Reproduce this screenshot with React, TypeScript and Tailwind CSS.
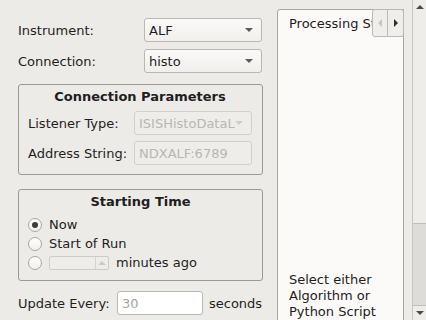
import React from 'react';

function Arrow({ dir, color }: { dir: 'down' | 'up' | 'left' | 'right'; color: string }) {
  const pts = {
    down: '0,0 8,0 4,4',
    up: '0,4 8,4 4,0',
    left: '4,0 4,8 0,4',
    right: '0,0 0,8 4,4',
  }[dir];
  const w = dir === 'left' || dir === 'right' ? 4 : 8;
  const h = dir === 'left' || dir === 'right' ? 8 : 4;
  return (
    <svg width={w} height={h} viewBox={`0 0 ${w} ${h}`}>
      <polygon points={pts} fill={color} />
    </svg>
  );
}

function Combo({ value, disabled }: { value: string; disabled?: boolean }) {
  return (
    <div
      className={
        'w-[118px] h-[24px] rounded-[3px] border flex items-center pl-[4px] pr-[8px] overflow-hidden ' +
        (disabled
          ? 'border-[#d3d0cb] bg-[#efedea] text-[#b9b6b1]'
          : 'border-[#bab6b0] bg-gradient-to-b from-[#fbfaf9] to-[#f1efed] text-[#1c1c1c]')
      }
    >
      <span className="flex-1 whitespace-nowrap overflow-hidden">{value}</span>
      <Arrow dir="down" color={disabled ? '#d0cdc8' : '#5a5a58'} />
    </div>
  );
}

function Radio({ checked }: { checked?: boolean }) {
  return (
    <div className="w-[14px] h-[14px] rounded-full border border-[#a9a59f] bg-gradient-to-b from-[#ffffff] to-[#f1efed] flex items-center justify-center">
      {checked && <div className="w-[6px] h-[6px] rounded-full bg-[#3c3c3c]" />}
    </div>
  );
}

export default function App() {
  return (
    <div className="w-[426px] h-[320px] flex bg-[#edebe8] overflow-hidden font-['DejaVu_Sans',sans-serif] text-[13px] leading-[17px] text-[#1e1e1e]">
      <div className="w-[277px] shrink-0 pl-[18px] pr-[14px] pt-[18px]">
        <div className="flex flex-col gap-[7px]">
          <div className="flex items-center">
            <span className="w-[126px]">Instrument:</span>
            <Combo value="ALF" />
          </div>
          <div className="flex items-center">
            <span className="w-[126px]">Connection:</span>
            <Combo value="histo" />
          </div>
        </div>

        <div className="mt-[11px] h-[91px] rounded-[3px] border border-[#9d9992] pt-[3px] pl-[9px] pr-[10px]">
          <div className="text-center font-bold">Connection Parameters</div>
          <div className="mt-[6px] flex items-center">
            <span className="w-[106px]">Listener Type:</span>
            <Combo value="ISISHistoDataListener" disabled />
          </div>
          <div className="mt-[6px] flex items-center">
            <span className="w-[106px]">Address String:</span>
            <div className="w-[118px] h-[24px] rounded-[3px] border border-[#d3d0cb] bg-[#efedea] text-[#b9b6b1] flex items-center pl-[4px]">
              NDXALF:6789
            </div>
          </div>
        </div>

        <div className="mt-[14px] h-[92px] rounded-[3px] border border-[#9d9992] pt-[3px] pl-[9px]">
          <div className="text-center font-bold pr-[9px]">Starting Time</div>
          <div className="mt-[5px] flex flex-col">
            <div className="h-[19px] flex items-center gap-[7px]">
              <Radio checked />
              <span>Now</span>
            </div>
            <div className="h-[19px] flex items-center gap-[7px]">
              <Radio />
              <span>Start of Run</span>
            </div>
            <div className="h-[19px] flex items-center gap-[7px]">
              <Radio />
              <div className="w-[60px] h-[14px] rounded-[2px] border border-[#cfccc7] bg-[#efedea] flex justify-end">
                <div className="w-[13px] border-l border-[#d6d3ce] flex items-center justify-center">
                  <Arrow dir="up" color="#cdcac5" />
                </div>
              </div>
              <span>minutes ago</span>
            </div>
          </div>
        </div>

        <div className="mt-[10px] flex items-center">
          <span className="w-[99px]">Update Every:</span>
          <div className="w-[86px] h-[24px] rounded-[3px] border border-[#bab6b0] bg-white text-[#a8a5a0] flex items-center pl-[4px]">
            30
          </div>
          <span className="ml-[6px]">seconds</span>
        </div>
      </div>

      <div className="mt-[9px] w-[127px] shrink-0 h-[340px] relative rounded-tl-[3px] border border-[#a9a59f] bg-[#fcfaf8]">
        <div className="pl-[11px] pt-[5px] whitespace-nowrap overflow-hidden">Processing Streams</div>
        <div className="absolute top-[-1px] right-[-1px] flex">
          <div className="w-[16px] h-[28px] rounded-l-[3px] border border-[#bcb8b2] bg-[#f0eeeb] flex items-center justify-center">
            <Arrow dir="left" color="#c9c6c1" />
          </div>
          <div className="w-[16px] h-[28px] rounded-r-[3px] border border-l-0 border-[#bcb8b2] bg-[#f0eeeb] flex items-center justify-center">
            <Arrow dir="right" color="#2e2e2e" />
          </div>
        </div>
        <div className="pl-[11px] mt-[240px] leading-[16px]">
          <div>Select either</div>
          <div>Algorithm or</div>
          <div>Python Script</div>
        </div>
      </div>

      <div className="w-[8px] shrink-0" />

      <div className="w-[14px] shrink-0 h-[320px] flex flex-col border-l border-[#c9c6c1] bg-[#dedcd8]">
        <div className="h-[14px] flex items-center justify-center bg-[#efedea]">
          <Arrow dir="up" color="#4a4a4a" />
        </div>
        <div className="h-[210px] bg-[#efedea] border-b border-[#c2beb8]" />
        <div className="flex-1" />
        <div className="h-[15px] flex items-center justify-center bg-[#efedea] border-t border-[#c2beb8]">
          <Arrow dir="down" color="#4a4a4a" />
        </div>
      </div>
    </div>
  );
}
